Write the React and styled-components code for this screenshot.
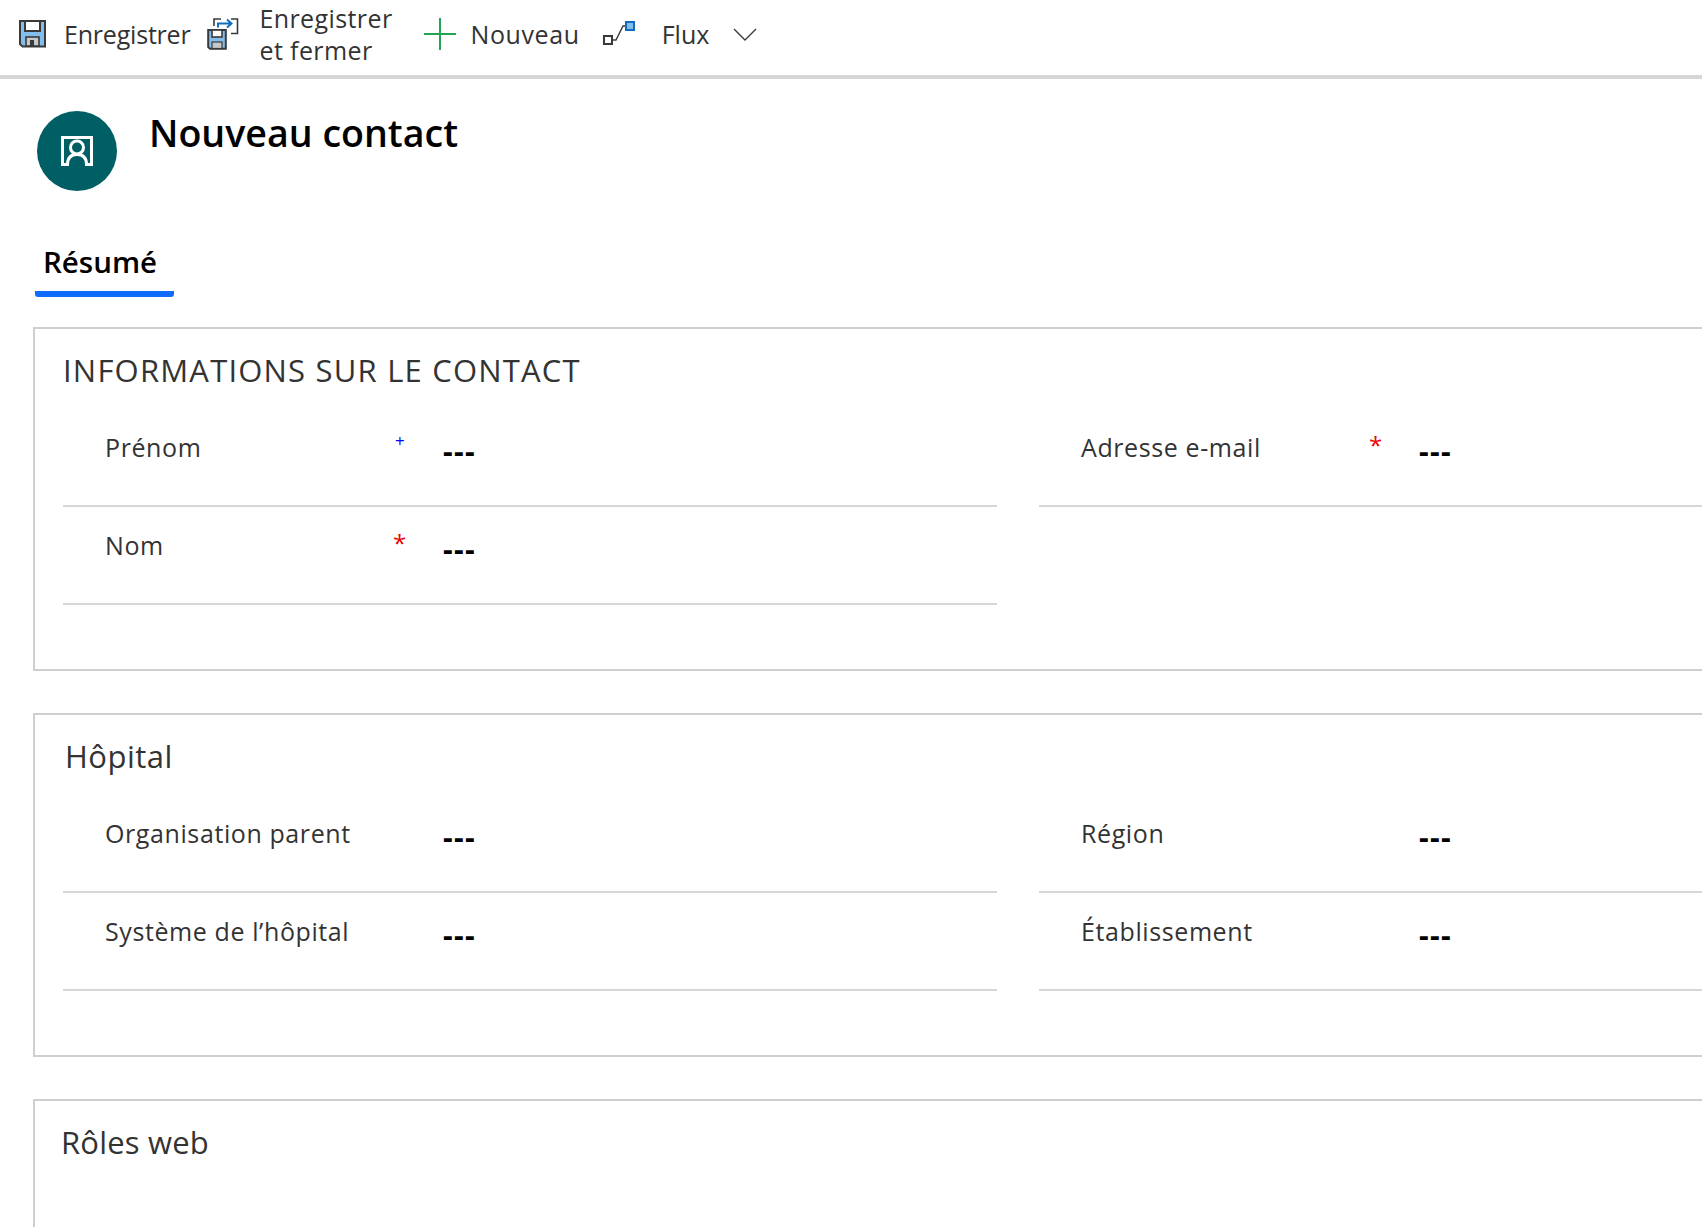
import React from "react";
import styled, { createGlobalStyle } from "styled-components";

const GlobalStyle = createGlobalStyle`
  html, body {
    margin: 0;
    padding: 0;
    height: 100%;
    overflow: hidden;
    background: #fff;
  }
  body {
    font-family: "Open Sans", "Noto Sans", "Liberation Sans", sans-serif;
  }
`;

const SaveIcon = ({ size = 28 }) => (
  <svg width={size} height={size} viewBox="0 0 28 28" fill="none">
    <path d="M1 1h25v25.5H3.5L1 24z" fill="#83bdec" stroke="#3a3a3a" strokeWidth="2" />
    <rect x="6" y="1" width="15" height="10" fill="#fff" stroke="#3a3a3a" strokeWidth="2" />
    <rect x="7" y="17" width="13" height="9" fill="#c8c8c8" stroke="#3a3a3a" strokeWidth="1.6" />
    <rect x="11" y="20" width="4" height="6" fill="#3a3a3a" />
  </svg>
);

const SaveCloseIcon = () => (
  <svg width="32" height="34" viewBox="0 0 32 34" fill="none">
    <path d="M7 9V2H14M24 2H30.5V16.5H24" stroke="#3a3a3a" strokeWidth="1.6" />
    <path d="M11 10.5V6.5H24M20 2.5L24.5 6.5L20 10.5" stroke="#106ebe" strokeWidth="2" />
    <path d="M1.2 13h17.6v18.8H3L1.2 30z" fill="#83bdec" stroke="#3a3a3a" strokeWidth="2" />
    <rect x="5" y="13" width="10" height="7" fill="#fff" stroke="#3a3a3a" strokeWidth="1.6" />
    <rect x="5" y="25" width="10" height="6.5" fill="#c8c8c8" stroke="#3a3a3a" strokeWidth="1.2" />
  </svg>
);

const PlusIcon = () => (
  <svg width="32" height="32" viewBox="0 0 32 32" fill="none">
    <path d="M16 0V32M0 16H32" stroke="#22a552" strokeWidth="2" />
  </svg>
);

const FlowIcon = () => (
  <svg width="32" height="26" viewBox="0 0 32 26" fill="none">
    <rect x="1" y="15" width="8" height="8" fill="#fff" stroke="#3a3a3a" strokeWidth="2" />
    <path d="M10 19H13L20 5H23" stroke="#3a3a3a" strokeWidth="1.4" />
    <rect x="23" y="1" width="8" height="8" fill="#83bdec" stroke="#106ebe" strokeWidth="2" />
  </svg>
);

const ChevronIcon = () => (
  <svg width="24" height="13" viewBox="0 0 24 13" fill="none">
    <path d="M1 1L12 12L23 1" stroke="#3a3a3a" strokeWidth="1.4" />
  </svg>
);

const ContactIcon = () => (
  <svg width="32" height="30" viewBox="0 0 32 30" fill="none">
    <path d="M1.5 1.5H30.5V28.5H25.5C25.5 21 21 18.5 16 18.5C11 18.5 6.5 21 6.5 28.5H1.5Z" stroke="#fff" strokeWidth="3" />
    <circle cx="16" cy="11.5" r="6.5" stroke="#fff" strokeWidth="3" />
  </svg>
);

const Page = styled.div`
  width: 1702px;
  height: 1227px;
  overflow: hidden;
`;

const Toolbar = styled.div`
  display: flex;
  align-items: center;
  height: 79px;
  box-sizing: border-box;
  padding: 0 0 7px 19px;
  border-bottom: 4px solid #d6d6d6;
`;

const ToolButton = styled.div`
  display: flex;
  align-items: center;
  gap: ${(p) => p.$gap}px;
  margin-right: ${(p) => p.$right}px;
  color: #333;
  font-size: 25px;
  line-height: 32px;
  letter-spacing: ${(p) => p.$spacing || 0}px;
  white-space: pre-line;
`;

const Header = styled.div`
  display: flex;
  align-items: flex-start;
  gap: 32px;
  padding: 32px 0 0 37px;
`;

const Avatar = styled.div`
  display: flex;
  align-items: center;
  justify-content: center;
  width: 80px;
  height: 80px;
  border-radius: 50%;
  background: #005e65;
`;

const Title = styled.h1`
  margin: 0;
  font-size: 37.6px;
  line-height: 44px;
  font-weight: 600;
  color: #000;
`;

const Tabs = styled.div`
  display: flex;
  margin: 42px 0 0 35px;
`;

const Tab = styled.div`
  width: 139px;
  height: 64px;
  box-sizing: border-box;
  padding: 9px 0 0 8px;
  border-bottom: 6px solid #0f6cfb;
  border-radius: 0 0 3px 3px;
  font-size: 29.5px;
  line-height: 40px;
  font-weight: 600;
  color: #000;
`;

const Sections = styled.div`
  display: flex;
  flex-direction: column;
  gap: 42px;
  margin: 30px -40px 0 33px;
`;

const Section = styled.section`
  height: ${(p) => p.$height}px;
  box-sizing: border-box;
  padding: 20px 0 0 ${(p) => p.$indent}px;
  border: 2px solid #cfcfcf;
  flex: none;
`;

const SectionTitle = styled.h2`
  margin: 0;
  font-size: 31px;
  line-height: 42px;
  font-weight: 400;
  letter-spacing: ${(p) => p.$spacing || 0.2}px;
  color: #333;
`;

const Grid = styled.div`
  display: grid;
  grid-template-columns: 934px 700px;
  column-gap: 42px;
  margin-top: 18px;
  margin-left: ${(p) => p.$shift}px;
`;

const Field = styled.div`
  display: grid;
  grid-template-columns: 290px 48px 1fr;
  height: 98px;
  box-sizing: border-box;
  padding: 21px 0 0 42px;
  border-bottom: 2px solid #d6d6d6;
`;

const Label = styled.div`
  font-size: 25px;
  line-height: 34px;
  letter-spacing: 0.6px;
  color: #333;
`;

const Marker = styled.div`
  margin-left: ${(p) => (p.$kind === "optional" ? 0 : -2)}px;
  font-size: ${(p) => (p.$kind === "optional" ? 17 : 24)}px;
  line-height: ${(p) => (p.$kind === "optional" ? 22 : 30)}px;
  color: ${(p) => (p.$kind === "optional" ? "#0000ff" : "#f00000")};
`;

const Value = styled.div`
  padding-top: 4px;
  font-size: 30px;
  line-height: 34px;
  font-weight: 700;
  letter-spacing: 1.4px;
  color: #000;
`;

const FieldRow = ({ label, marker }) => (
  <Field>
    <Label>{label}</Label>
    <Marker $kind={marker}>{marker === "optional" ? "+" : marker === "required" ? "*" : ""}</Marker>
    <Value>---</Value>
  </Field>
);

const App = () => (
  <Page>
    <GlobalStyle />
    <Toolbar>
      <ToolButton $gap={17} $right={17} $spacing={-0.2}>
        <SaveIcon />
        Enregistrer
      </ToolButton>
      <ToolButton $gap={20} $right={31} $spacing={0.4}>
        <SaveCloseIcon />
        {"Enregistrer\net fermer"}
      </ToolButton>
      <ToolButton $gap={15} $right={23} $spacing={0.6}>
        <PlusIcon />
        Nouveau
      </ToolButton>
      <ToolButton $gap={27} $right={24}>
        <FlowIcon />
        Flux
      </ToolButton>
      <ChevronIcon />
    </Toolbar>

    <Header>
      <Avatar>
        <ContactIcon />
      </Avatar>
      <Title>Nouveau contact</Title>
    </Header>

    <Tabs>
      <Tab>Résumé</Tab>
    </Tabs>

    <Sections>
      <Section $height={344} $indent={28}>
        <SectionTitle $spacing={1.2}>INFORMATIONS SUR LE CONTACT</SectionTitle>
        <Grid $shift={0}>
          <FieldRow label="Prénom" marker="optional" />
          <FieldRow label="Adresse e-mail" marker="required" />
          <FieldRow label="Nom" marker="required" />
        </Grid>
      </Section>

      <Section $height={344} $indent={30}>
        <SectionTitle $spacing={0.5}>Hôpital</SectionTitle>
        <Grid $shift={-2}>
          <FieldRow label="Organisation parent" />
          <FieldRow label="Région" />
          <FieldRow label="Système de l’hôpital" />
          <FieldRow label="Établissement" />
        </Grid>
      </Section>

      <Section $height={300} $indent={26}>
        <SectionTitle>Rôles web</SectionTitle>
      </Section>
    </Sections>
  </Page>
);

export default App;
